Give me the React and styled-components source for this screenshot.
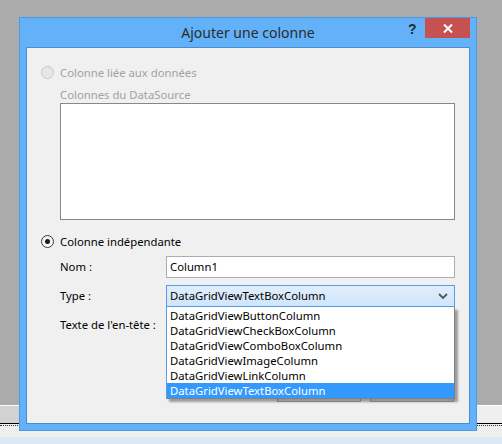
import React from 'react'
import styled, {createGlobalStyle} from 'styled-components'

const GlobalStyle = createGlobalStyle`
    html, body {
        margin: 0;
        padding: 0;
        width: 502px;
        height: 444px;
        overflow: hidden;
        font-family: "Noto Sans", "Open Sans", sans-serif;
    }
`

const Desktop = styled.div`
    position: relative;
    width: 502px;
    height: 444px;
    display: flex;
    flex-direction: column;
    background: #efefef;
`

const GrayArea = styled.div`
    height: 405px;
    background: #ababab;
    border-bottom: 1px solid #ffffff;
`

const Band = styled.div`
    display: flex;
    height: 17px;
    border-bottom: 1px solid #000000;
`

const BandPart = styled.div`
    width: ${p => p.width || 'auto'};
    flex: ${p => p.width ? 'none' : 1};
    background: ${p => p.color};
`

const Dotted = styled.div`
    height: 0;
    margin-top: 1px;
    border-bottom: 1px dotted #333;
`

const StatusStrip = styled.div`
    margin-top: 11px;
    height: 7px;
    background: #dde8f4;
`

const Window = styled.div`
    position: absolute;
    left: 19px;
    top: 17px;
    width: 444px;
    height: 406px;
    background: #63b2f9;
    border: 1px solid #4d9ae2;
    display: flex;
    flex-direction: column;
    padding: 0 6px 6px 6px;
`

const TitleBar = styled.div`
    height: 29px;
    display: flex;
    align-items: flex-start;
`

const Title = styled.div`
    flex: 1;
    text-align: center;
    font-size: 14px;
    line-height: 30px;
    color: #2b2b2b;
    padding-left: 62px;
`

const HelpMark = styled.div`
    font-family: "Liberation Sans", Arial, sans-serif;
    font-weight: bold;
    font-size: 14px;
    color: #2b2b2b;
    line-height: 20px;
    width: 8px;
    margin-right: 9px;
    margin-top: 1px;
`

const CloseButton = styled.div`
    width: 45px;
    height: 20px;
    background: #c75050;
    display: flex;
    align-items: center;
    justify-content: center;
`

const Client = styled.div`
    flex: 1;
    background: #f0f0f0;
    border: 1px solid #4a8ccc;
    padding: 17px 14px 0 14px;
    display: flex;
    flex-direction: column;
    overflow: hidden;
    font-size: 11.3px;
    color: #000;
`

const RadioRow = styled.div`
    display: flex;
    align-items: center;
    gap: 6px;
    height: 14px;
    margin-top: ${p => p.top || 0}px;
    color: ${p => p.disabled ? '#a2a2a2' : '#000'};
`

const RadioCircle = styled.span`
    width: 11px;
    height: 11px;
    border-radius: 50%;
    border: 1px solid ${p => p.disabled ? '#c6c6c6' : '#3c3c3c'};
    background: ${p => p.disabled ? '#e6e6e6' : 'linear-gradient(#ececec, #ffffff)'};
    display: flex;
    align-items: center;
    justify-content: center;
    &::after {
        content: '';
        display: ${p => p.checked ? 'block' : 'none'};
        width: 5px;
        height: 5px;
        border-radius: 50%;
        background: #1a1a1a;
    }
`

const Indented = styled.div`
    padding-left: 19px;
    display: flex;
    flex-direction: column;
`

const GroupLabel = styled.div`
    color: #a2a2a2;
    height: 16px;
    line-height: 16px;
    margin-top: 8px;
`

const ListBox = styled.div`
    height: 115px;
    background: #ffffff;
    border: 1px solid #828790;
`

const FormGrid = styled.div`
    display: grid;
    grid-template-columns: 106px 289px;
    grid-auto-rows: 22px;
    row-gap: 7px;
    margin-top: 8px;
    align-items: center;
`

const FieldLabel = styled.div`
    line-height: 22px;
`

const TextBox = styled.div`
    height: 20px;
    border: 1px solid #abadb3;
    background: #fff;
    padding-left: 3px;
    line-height: 20px;
`

const ComboWrap = styled.div`
    position: relative;
    height: 22px;
`

const Combo = styled.div`
    height: 20px;
    border: 1px solid #569de5;
    background: linear-gradient(#e0eefc, #cfe5fb);
    padding-left: 3px;
    padding-right: 6px;
    line-height: 20px;
    display: flex;
    justify-content: space-between;
    align-items: center;
`

const DropList = styled.div`
    position: absolute;
    top: 22px;
    left: 0;
    width: 287px;
    background: #fff;
    border: 1px solid #569de5;
    border-right-color: #808080;
    border-bottom-color: #808080;
    border-top: none;
    padding-top: 1px;
    box-shadow: 3px 3px 2px rgba(0, 0, 0, 0.35);
    z-index: 2;
`

const DropItem = styled.div`
    height: 15px;
    line-height: 15px;
    padding-left: 3px;
    background: ${p => p.selected ? '#3399ff' : 'transparent'};
    color: ${p => p.selected ? '#fff' : '#000'};
`

const ButtonRow = styled.div`
    display: flex;
    gap: 9px;
    margin-top: 43px;
    padding-left: 236px;
`

const DialogButton = styled.div`
    width: 82px;
    height: 21px;
    border: 1px solid #acacac;
    background: #e5e5e5;
`

const types = [
    'DataGridViewButtonColumn',
    'DataGridViewCheckBoxColumn',
    'DataGridViewComboBoxColumn',
    'DataGridViewImageColumn',
    'DataGridViewLinkColumn',
    'DataGridViewTextBoxColumn'
]

const App = () => {
    const selected = 'DataGridViewTextBoxColumn'

    return (
        <Desktop>
            <GlobalStyle/>
            <GrayArea/>
            <Band>
                <BandPart width='60px' color='#d2d2d2'/>
                <BandPart color='#efefef'/>
            </Band>
            <Dotted/>
            <StatusStrip/>

            <Window>
                <TitleBar>
                    <Title>Ajouter une colonne</Title>
                    <HelpMark>?</HelpMark>
                    <CloseButton>
                        <svg width='10' height='9' viewBox='0 0 10 9'>
                            <path d='M1 0.5 L9 8.5 M9 0.5 L1 8.5' stroke='#fff' strokeWidth='2'/>
                        </svg>
                    </CloseButton>
                </TitleBar>
                <Client>
                    <RadioRow disabled>
                        <RadioCircle disabled/>
                        Colonne liée aux données
                    </RadioRow>
                    <Indented>
                        <GroupLabel>Colonnes du DataSource</GroupLabel>
                        <ListBox/>
                    </Indented>
                    <RadioRow top={14}>
                        <RadioCircle checked/>
                        Colonne indépendante
                    </RadioRow>
                    <Indented>
                        <FormGrid>
                            <FieldLabel>Nom :</FieldLabel>
                            <TextBox>Column1</TextBox>
                            <FieldLabel>Type :</FieldLabel>
                            <ComboWrap>
                                <Combo>
                                    {selected}
                                    <svg width='10' height='6' viewBox='0 0 10 6'>
                                        <path d='M1 1 L5 5 L9 1' stroke='#555' strokeWidth='1.8' fill='none'/>
                                    </svg>
                                </Combo>
                                <DropList>
                                    {types.map(t => (
                                        <DropItem key={t} selected={t === selected}>{t}</DropItem>
                                    ))}
                                </DropList>
                            </ComboWrap>
                            <FieldLabel>Texte de l'en-tête :</FieldLabel>
                            <TextBox/>
                        </FormGrid>
                    </Indented>
                    <ButtonRow>
                        <DialogButton/>
                        <DialogButton/>
                    </ButtonRow>
                </Client>
            </Window>
        </Desktop>
    )
}

export default App
